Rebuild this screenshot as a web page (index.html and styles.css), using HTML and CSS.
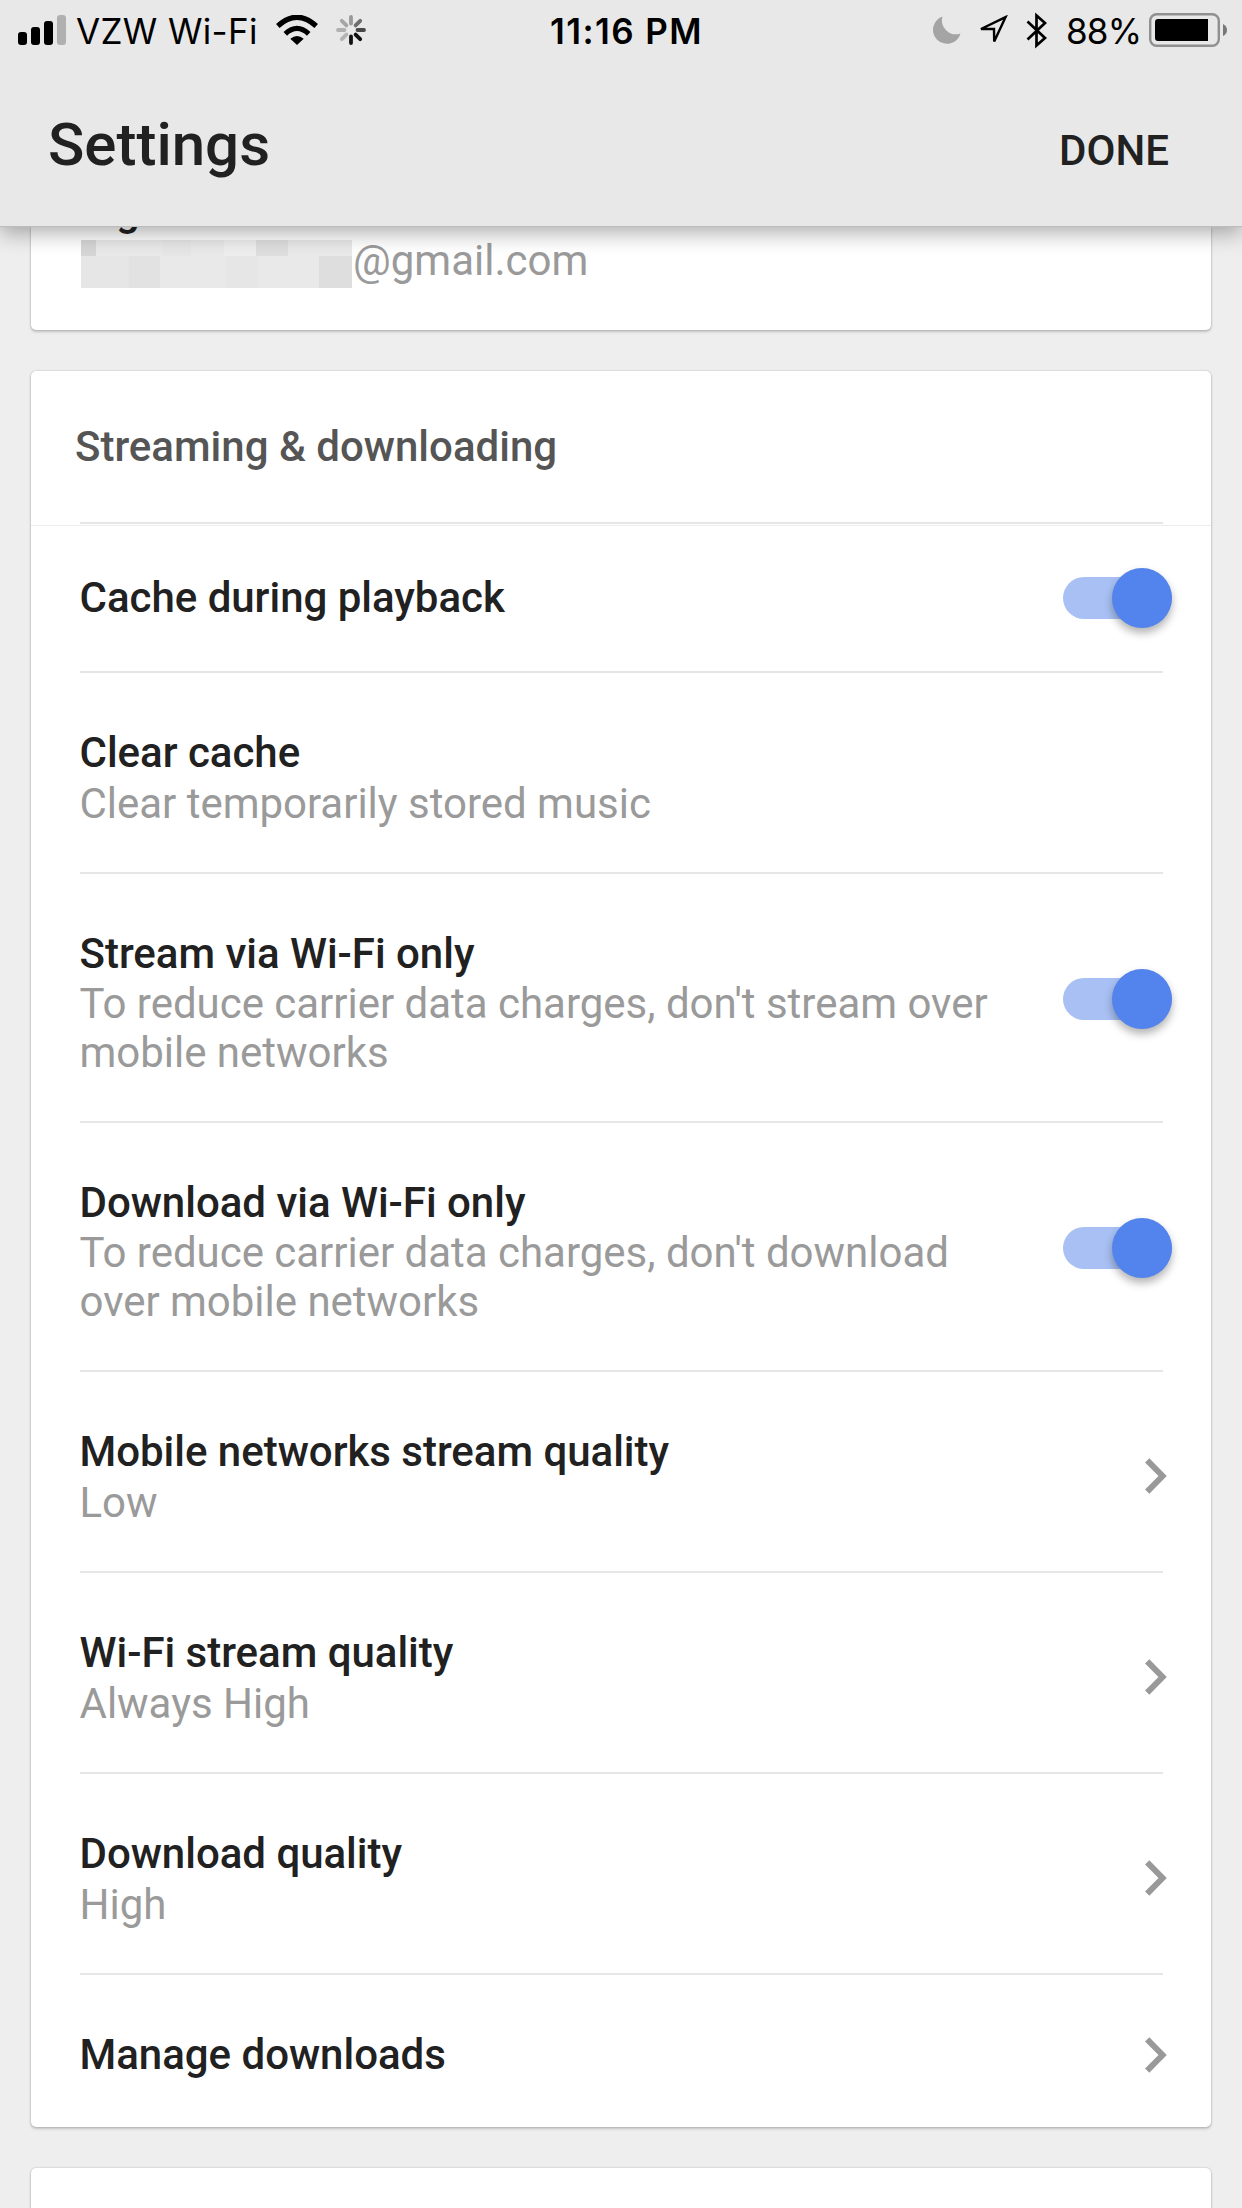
FILE: index.html
```html
<!DOCTYPE html>
<html lang="en">
<head>
<meta charset="utf-8">
<title>Settings</title>
<link rel="stylesheet" href="styles.css">
</head>
<body>
<header class="header">
  <div class="status">
    <div class="status-left">
      <svg class="signal" width="48" height="30" viewBox="0 0 48 30"><rect y="17" width="9" height="13" rx="3"/><rect x="13" y="12" width="9" height="18" rx="3"/><rect x="26" y="6" width="9" height="24" rx="3"/><rect x="39" width="9" height="30" rx="3" fill="#b0b0b0"/></svg>
      <span class="carrier">VZW Wi-Fi</span>
      <svg class="wifi" width="42" height="30" viewBox="0 0 42 30"><path d="M21 30L14.300 23.800Q21 18.400 27.700 23.800Z"/><path d="M9.300 18.800Q21 8 32.700 18.800M1.800 11Q21 -6.500 40.200 11" fill="none" stroke="#000" stroke-width="5.200"/></svg>
      <svg class="spinner" width="32" height="32" viewBox="-16 -16 32 32"><g stroke-width="3.800" stroke-linecap="round"><path d="M0-6.500V-13" stroke="#999"/><path d="M4.600-4.600L9.200-9.200" stroke="#6e6e6e"/><path d="M6.500 0H13" stroke="#484848"/><path d="M4.600 4.600L9.200 9.200" stroke="#111"/><path d="M0 6.500V13" stroke="#111"/><path d="M-4.600 4.600L-9.200 9.200" stroke="#b4b4b4"/><path d="M-6.500 0H-13" stroke="#b0b0b0"/><path d="M-4.600-4.600L-9.200-9.200" stroke="#a6a6a6"/></g></svg>
    </div>
    <span class="time">11:16 PM</span>
    <div class="status-right">
      <svg class="moon" width="28" height="28" viewBox="0 0 28 28"><path d="M9.500 0.500A14 14 0 1 0 27.500 17.500A14 14 0 0 1 9.500 0.500Z" fill="#a4a4a4"/></svg>
      <svg class="location" width="30" height="31" viewBox="0 0 30 31"><path d="M27.500 2.200L3 14H16L16.200 26.500Z" fill="none" stroke="#000" stroke-width="2.400"/></svg>
      <svg class="bluetooth" width="22" height="37" viewBox="0 0 22 37"><path d="M1.500 9.500L19 26L10.500 33.500V3.500L19 11L1.500 27.500" fill="none" stroke="#000" stroke-width="2.700"/></svg>
      <span class="percent">88%</span>
      <svg class="battery" width="79" height="34" viewBox="0 0 79 34"><rect x="1.200" y="1.200" width="68.600" height="31.600" rx="6.500" fill="none" stroke="#909090" stroke-width="2.400"/><path d="M9 6H59V28H9Q6 28 6 25V9Q6 6 9 6Z"/><path d="M74 11Q78 13 78 17T74 23Z" fill="#777"/></svg>
    </div>
  </div>
  <div class="titlebar">
    <h1 class="title">Settings</h1>
    <span class="done">DONE</span>
  </div>
</header>
<main class="content">
  <section class="card account">
    <div class="label">Sign out</div>
    <div class="email"><svg class="mosaic" width="271" height="48" viewBox="0 0 271 48" shape-rendering="crispEdges"><path fill="#e9e9e9" d="M0 0H271V48H0Z"/><path fill="#d6d6d6" d="M0 0H15V16H0Z"/><path fill="#e6e6e6" d="M81 0H110V16H81ZM0 16H48V48H0ZM145 16H177V48H145Z"/><path fill="#eee" d="M143 0H175V16H143Z"/><path fill="#dedede" d="M175 0H207V16H175ZM238 16H271V48H238Z"/><path fill="#e2e2e2" d="M48 16H79V48H48Z"/></svg><span class="domain">@gmail.com</span></div>
  </section>
  <section class="card">
    <h2 class="card-title">Streaming &amp; downloading</h2>
    <div class="row single first"><div class="label">Cache during playback</div><span class="toggle"></span></div>
    <div class="row"><div class="text"><div class="label">Clear cache</div><div class="sub">Clear temporarily stored music</div></div></div>
    <div class="row double"><div class="text"><div class="label">Stream via Wi-Fi only</div><div class="sub">To reduce carrier data charges, don't stream over<br>mobile networks</div></div><span class="toggle"></span></div>
    <div class="row double"><div class="text"><div class="label">Download via Wi-Fi only</div><div class="sub">To reduce carrier data charges, don't download<br>over mobile networks</div></div><span class="toggle"></span></div>
    <div class="row"><div class="text"><div class="label">Mobile networks stream quality</div><div class="sub">Low</div></div><svg class="chevron" width="22" height="36" viewBox="0 0 22 36"><path d="M2.200 2.300L17.600 18L2.200 33.700"/></svg></div>
    <div class="row"><div class="text"><div class="label">Wi-Fi stream quality</div><div class="sub">Always High</div></div><svg class="chevron" width="22" height="36" viewBox="0 0 22 36"><path d="M2.200 2.300L17.600 18L2.200 33.700"/></svg></div>
    <div class="row"><div class="text"><div class="label">Download quality</div><div class="sub">High</div></div><svg class="chevron" width="22" height="36" viewBox="0 0 22 36"><path d="M2.200 2.300L17.600 18L2.200 33.700"/></svg></div>
    <div class="row single last"><div class="label">Manage downloads</div><svg class="chevron" width="22" height="36" viewBox="0 0 22 36"><path d="M2.200 2.300L17.600 18L2.200 33.700"/></svg></div>
  </section>
  <section class="card next"></section>
</main>
</body>
</html>
```
FILE: styles.css
```css
* { box-sizing: border-box; }
body {
  margin: 0;
  height: 2208px;
  overflow: hidden;
  background: #eee;
  color: #212121;
  font: 42px/49px Roboto, sans-serif;
}
svg { display: block; flex: none; }
.header {
  position: relative;
  z-index: 1;
  height: 227px;
  background: #e8e8e8;
  border-bottom: 1px solid #bdbdbd;
  box-shadow: 0 6px 20px rgba(0, 0, 0, .32);
}

/* Status bar */
.status {
  display: grid;
  grid-template-columns: 1fr auto 1fr;
  height: 60px;
  font: 35px/62px Inter, sans-serif;
  color: #000;
  white-space: nowrap;
}
.status-left, .status-right { display: flex; align-items: center; height: 60px; }
.status-left { padding-left: 18px; }
.status-right { justify-content: flex-end; padding-right: 14px; }
.carrier, .percent { margin-top: 2px; }
.carrier { width: 200px; margin-left: 10px; letter-spacing: .35px; }
.time { width: 160px; padding-left: 9px; font-weight: 600; letter-spacing: 1.4px; }
.spinner { margin-left: 17px; }
.location { margin-left: 17px; }
.bluetooth { margin-left: 18px; }
.percent { width: 83px; margin-left: 18px; letter-spacing: -.8px; }

/* Title bar */
.titlebar {
  display: flex;
  justify-content: space-between;
  align-items: baseline;
  padding: 50px 73px 0 48px;
}
.title { margin: 0; font: 500 60px/70px Roboto, sans-serif; }
.done { font-weight: 500; }

/* Cards */
.content { padding: 0 31px; }
.card {
  background: #fff;
  border-radius: 5px;
  box-shadow: 0 0 2px rgba(0, 0, 0, .25), 0 2px 3px rgba(0, 0, 0, .18);
}
.account {
  height: 103px;
  margin-bottom: 41px;
  border-radius: 0 0 5px 5px;
}
.account .label { position: relative; top: -41px; margin-left: 49px; }
.email { position: relative; top: -37px; display: flex; gap: 1px; padding-left: 50px; color: #9a9a9a; }
.domain { margin-top: -4px; }
.card-title {
  margin: 0;
  height: 151px;
  padding: 51px 44px 0;
  font-size: 42px;
  font-weight: 500;
  color: #555;
}

/* Rows */
.row {
  display: flex;
  align-items: center;
  justify-content: space-between;
  margin: 0 48px 0 49px;
  border-top: 2px solid #e6e6e6;
  padding: 55px 0 44px;
}
.first { position: relative; padding: 49px 0; }
.first::before {
  content: "";
  position: absolute;
  top: 1px;
  left: -49px;
  right: -48px;
  height: 1px;
  background: #ececec;
}
.last { padding-bottom: 48px; }
.label { margin: 0 0 2px -.5px; font-weight: 500; letter-spacing: -.02px; white-space: nowrap; }
.double .label, .account .label { margin-bottom: 1px; }
.single .label { margin-bottom: 0; }
.sub { margin-left: -.5px; color: #9a9a9a; letter-spacing: -.02px; white-space: nowrap; }
.toggle {
  flex: none;
  position: relative;
  width: 108.5px;
  height: 42px;
  margin-right: -8.5px;
  border-radius: 21px;
  background: #a8c0f3;
}
.double .toggle { margin-bottom: 9px; }
.toggle::after {
  content: "";
  position: absolute;
  right: 0;
  top: -9px;
  width: 60px;
  height: 60px;
  border-radius: 50%;
  background: #5383ec;
  box-shadow: 0 5px 8px rgba(0, 0, 0, .3);
}
.chevron { margin: 0 -4px 3px 0; fill: none; stroke: #999; stroke-width: 6; }
.single .chevron { margin-bottom: 0; }
.next { height: 60px; margin-top: 41px; }
```
